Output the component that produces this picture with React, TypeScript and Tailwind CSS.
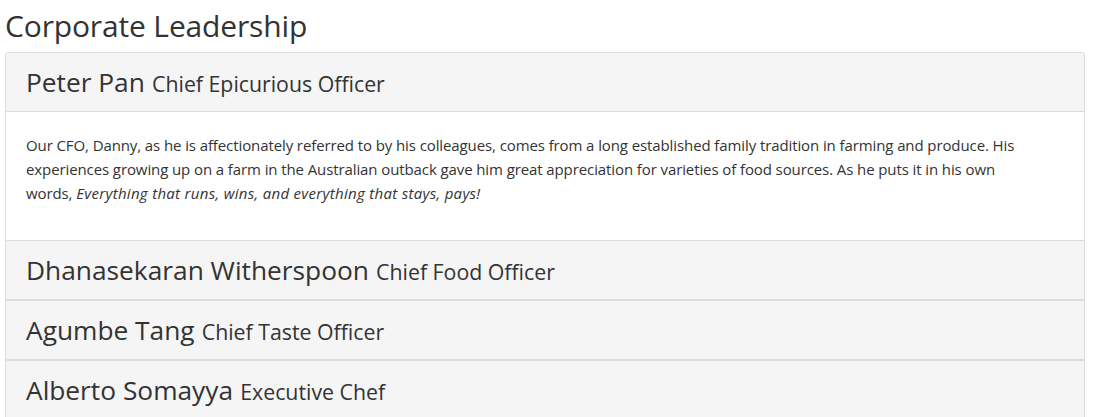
import React from "react";

interface Leader {
  id: string;
  name: string;
  title: string;
}

const LEADERS: Leader[] = [
  { id: "l1", name: "Peter Pan", title: "Chief Epicurious Officer" },
  { id: "l2", name: "Dhanasekaran Witherspoon", title: "Chief Food Officer" },
  { id: "l3", name: "Agumbe Tang", title: "Chief Taste Officer" },
  { id: "l4", name: "Alberto Somayya", title: "Executive Chef" },
];

function PanelHeading({ item }: { item: Leader }) {
  return (
    <div className="bg-[#f5f5f5] h-[58px] px-[20px] pt-[11px] leading-[36px] whitespace-nowrap">
      <span className="text-[26.3px]">{item.name}</span>{" "}
      <span className="ml-[3px] text-[21.3px]">{item.title}</span>
    </div>
  );
}

export default function App(): React.JSX.Element {
  const [first, ...rest] = LEADERS;

  return (
    <div
      className="min-h-screen bg-white text-[#333] px-[5px]"
      style={{ fontFamily: '"Open Sans", Arial, sans-serif' }}
    >
      {/* heading */}
      <h2 className="pt-[9px] mb-[9px] text-[30px] leading-[34px] tracking-[-0.15px]">
        Corporate Leadership
      </h2>

      <div className="w-[1080px]">
        {/* open panel */}
        <div className="border border-b-0 border-[#ddd] rounded-t-[4px] overflow-hidden">
          <div className="border-b border-[#ddd]">
            <PanelHeading item={first} />
          </div>
          <div className="bg-white pt-[21px] pb-[35px] pl-[20px] pr-[50px] text-[15px] leading-[24px] tracking-[-0.1px] h-[128px]">
            <p>
              Our CFO, Danny, as he is affectionately referred to by his
              colleagues, comes from a long established family tradition in
              farming and produce. His experiences growing up on a farm in the
              Australian outback gave him great appreciation for varieties of
              food sources. As he puts it in his own words,{" "}
              <em className="tracking-[0.3px]">
                Everything that runs, wins, and everything that stays, pays!
              </em>
            </p>
          </div>
        </div>

        {/* collapsed panels */}
        {rest.map((item) => (
          <div key={item.id} className="border border-[#ddd]">
            <PanelHeading item={item} />
          </div>
        ))}
      </div>
    </div>
  );
}
